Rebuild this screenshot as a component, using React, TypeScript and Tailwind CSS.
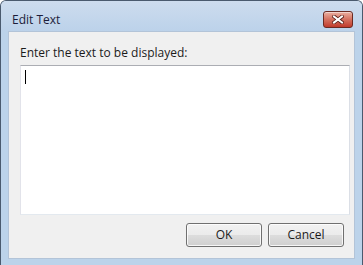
import { useState } from "react";

const FONT = { fontFamily: '"Open Sans", "Noto Sans", Arial, sans-serif' };

function CloseButton() {
  return (
    <button
      aria-label="Close"
      className="flex h-[17px] w-[30px] items-center justify-center rounded-[3px] border border-[#6b2a22] bg-gradient-to-b from-[#eab0a2] via-[#d4705f] to-[#c0392b] shadow-[inset_0_1px_0_rgba(255,255,255,0.45)]"
    >
      <svg width="12" height="9" viewBox="0 0 12 9">
        <path d="M2 1.5 L10 7.5 M10 1.5 L2 7.5" stroke="#5a1f18" strokeWidth="3.6" strokeLinecap="square" />
        <path d="M2 1.5 L10 7.5 M10 1.5 L2 7.5" stroke="#ffffff" strokeWidth="2" strokeLinecap="square" />
      </svg>
    </button>
  );
}

function DialogButton({ label }: { label: string }) {
  return (
    <button
      className="h-[24px] w-[76px] rounded-[3px] border border-[#707070] text-[12px] leading-none text-[#1b1b1b] shadow-[inset_0_0_0_1px_rgba(255,255,255,0.8)]"
      style={{ backgroundImage: "linear-gradient(#f2f2f2 0%, #ebebeb 50%, #dddddd 50%, #cfcfcf 100%)" }}
    >
      {label}
    </button>
  );
}

export default function App() {
  const [text] = useState("");

  return (
    <div
      className="flex h-[265px] w-[363px] flex-col overflow-hidden rounded-t-[6px] border-x border-t border-[#4a5a6e] bg-[#bcd3ea]"
      style={FONT}
    >
      {/* title bar */}
      <div className="flex h-[30px] items-start bg-gradient-to-b from-[#cddcee] to-[#bcd2ea] pl-[11px] pr-[9px]">
        <span className="mt-[12px] text-[12px] leading-[14px] text-[#1c1c3a]">Edit Text</span>
        <div className="ml-auto mt-[10px]">
          <CloseButton />
        </div>
      </div>

      {/* client area */}
      <div className="mx-[7px] flex h-[228px] flex-col border border-[#b3c4d8] bg-[#f0f0f0] pl-[11px] pr-[4px]">
        <p className="mt-[14px] text-[12px] leading-[14px] text-[#1b1b1b]">Enter the text to be displayed:</p>
        <div className="mt-[5px] h-[150px] border border-t-[#abadb3] border-r-[#dbdfe6] border-b-[#e3e9ef] border-l-[#e2e3ea] bg-white pl-[4px] pt-[4px]">
          {text}
          <span className="block h-[14px] w-px bg-black" />
        </div>
        <div className="mt-[8px] flex justify-end gap-[6px] pr-[6px]">
          <DialogButton label="OK" />
          <DialogButton label="Cancel" />
        </div>
      </div>
    </div>
  );
}
